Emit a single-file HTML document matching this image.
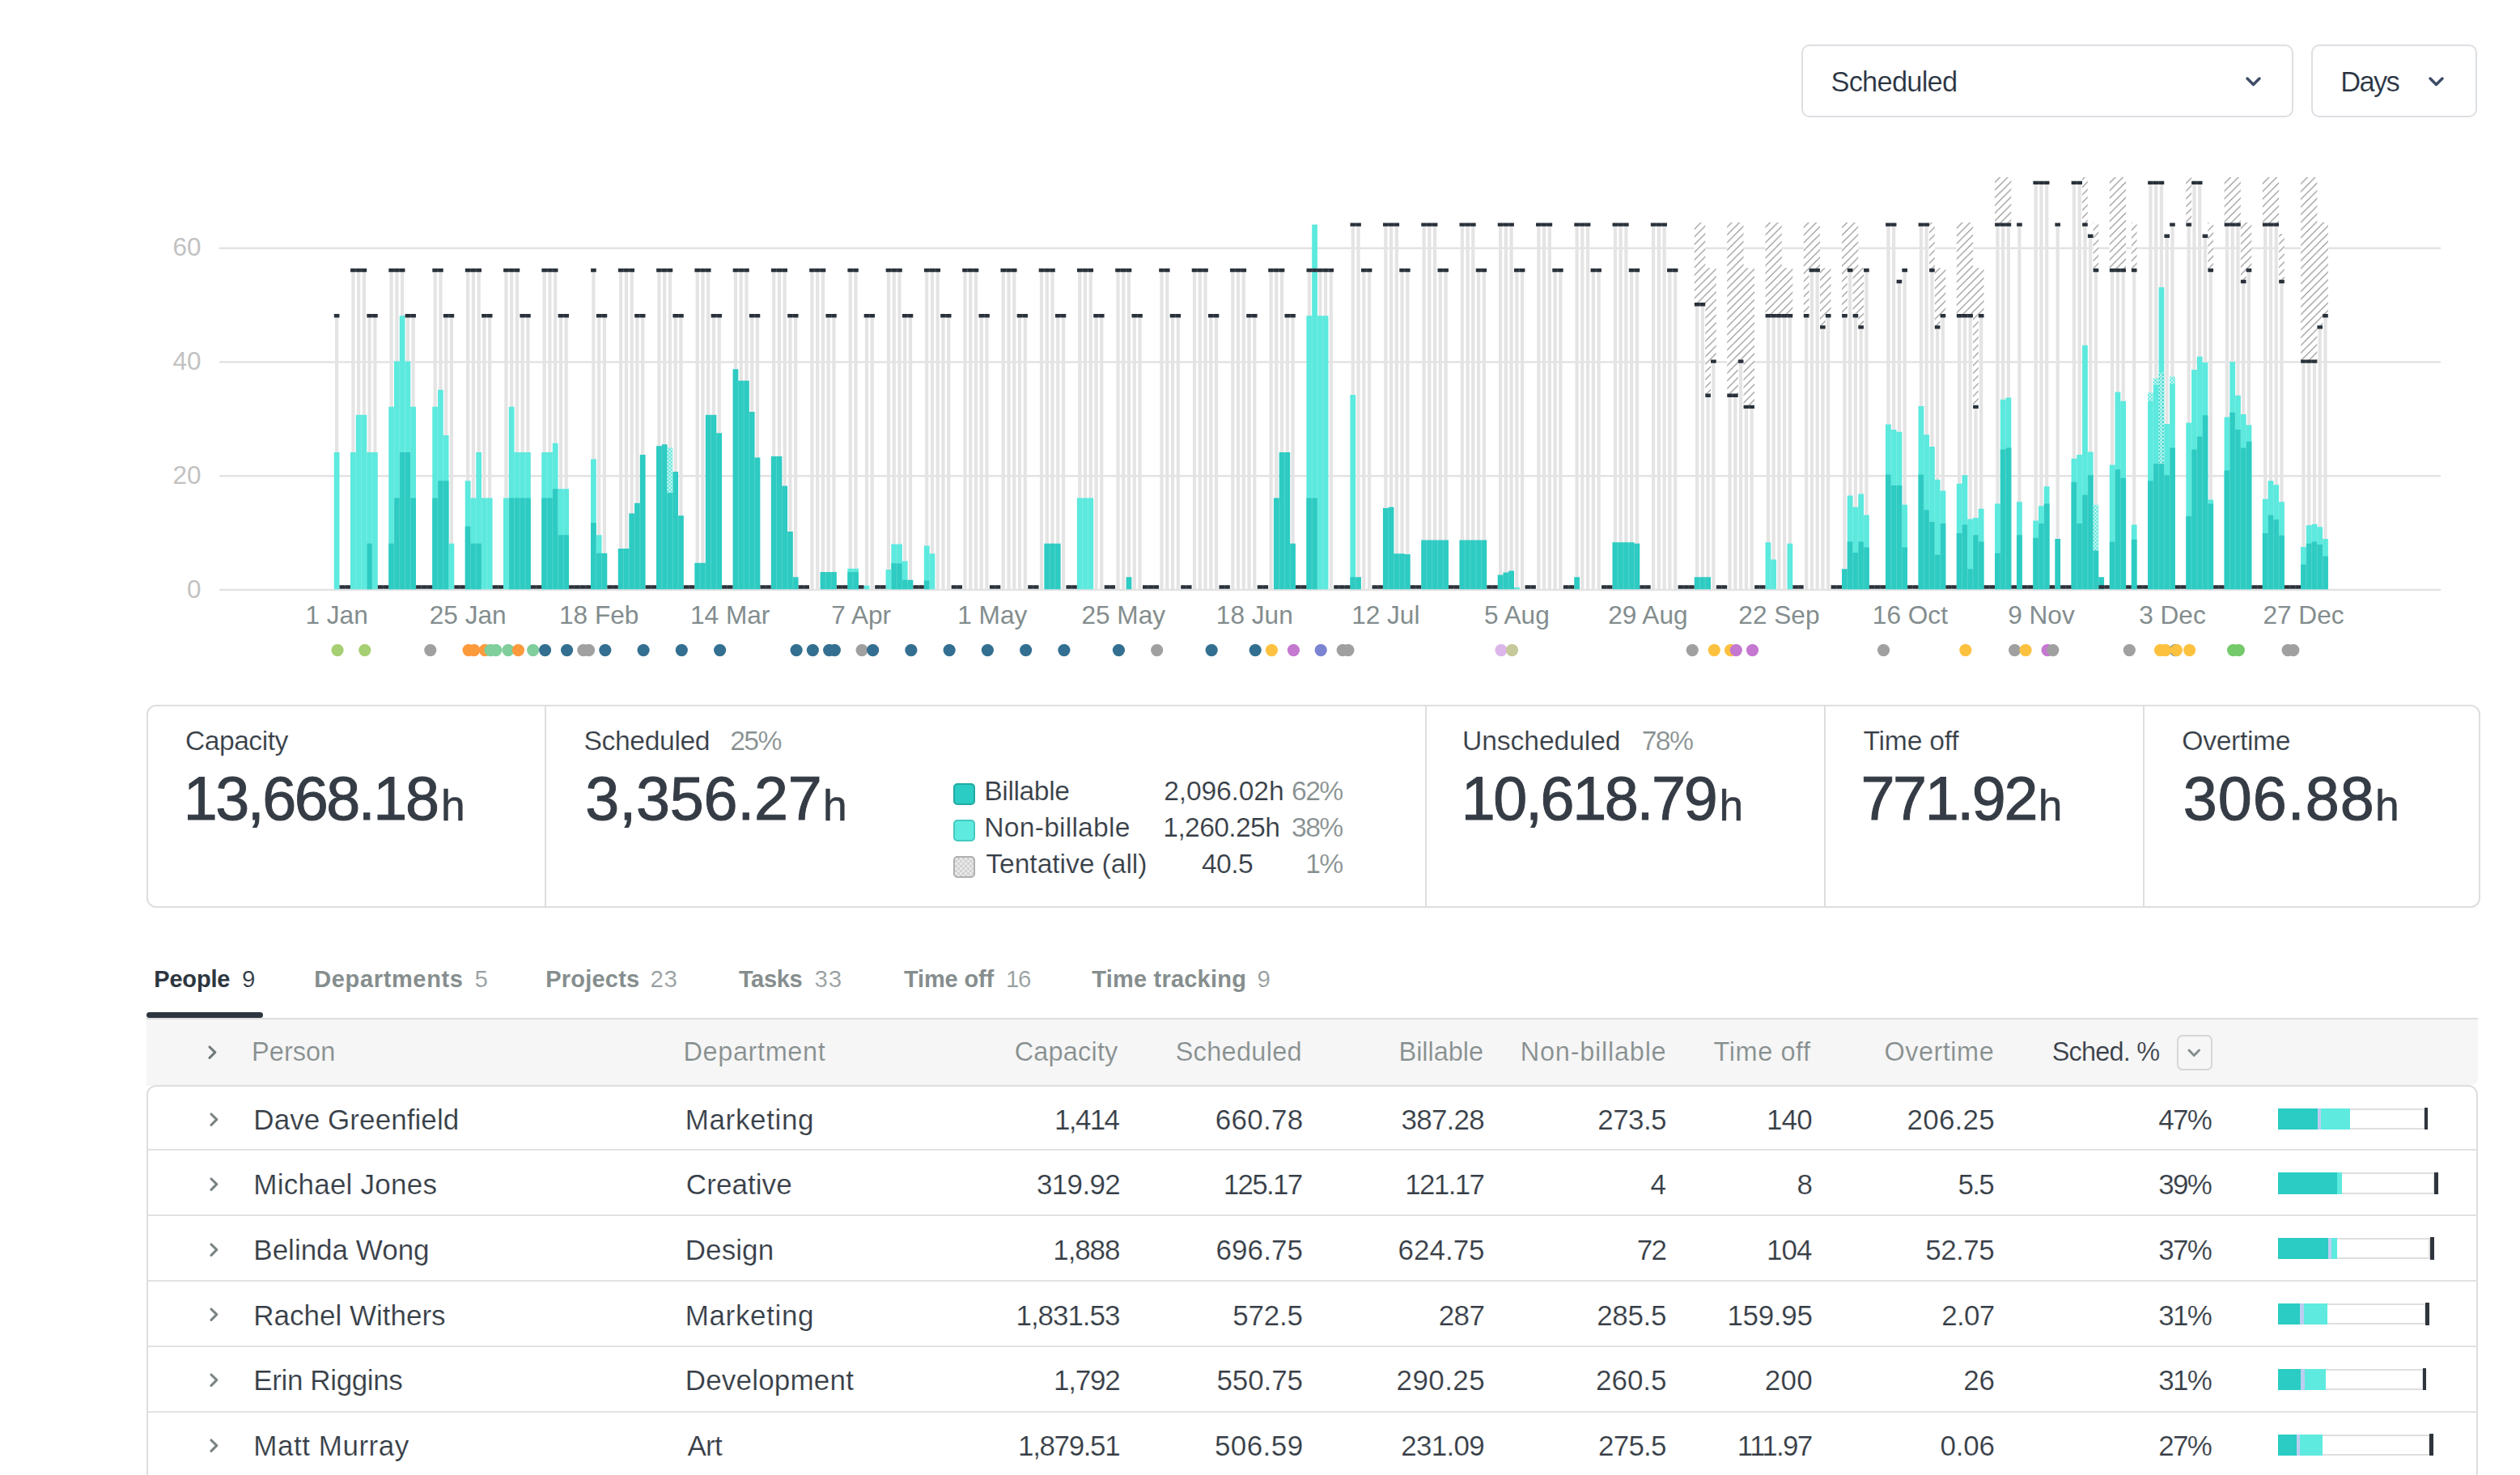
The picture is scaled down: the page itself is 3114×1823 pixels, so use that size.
<!DOCTYPE html>
<html lang="en"><head><meta charset="utf-8"><title>Report</title>
<style>
*{box-sizing:border-box;margin:0;padding:0}
html,body{width:3114px;height:1823px;overflow:hidden;background:#fff}
body{font-family:"Liberation Sans",sans-serif;color:#363d46;position:relative}
.a{position:absolute}
.t{position:absolute;line-height:1;white-space:nowrap}
.chart{position:absolute;left:0;top:0}
.chart text{font-family:"Liberation Sans",sans-serif}
.yl{font-size:31.5px;fill:#c2c2c2}
.xl{font-size:31.6px;fill:#838d8e}
.dd{position:absolute;top:55px;height:90px;border:2px solid #dddfe3;border-radius:10px;background:#fff}
.cards{position:absolute;left:181px;top:871px;width:2884px;height:251px;border:2px solid #dedede;border-radius:12px}
.cards i{position:absolute;top:0;width:2px;height:247px;background:#dedede}
.sw{position:absolute;left:1178px;width:27px;height:27px;border-radius:5px;border:2px solid}
.bt{position:absolute;height:26.2px}
</style></head><body>
<svg class="chart" width="3114" height="850" viewBox="0 0 3114 850">
<defs><pattern id="hatch" width="9.5" height="9.5" patternUnits="userSpaceOnUse" patternTransform="translate(2 0)"><rect width="9.5" height="9.5" fill="#fff"/><path d="M-1 10.5L10.5 -1M-5.75 5.75L5.75 -5.75M3.75 15.25L15.25 3.75" stroke="#858585" stroke-width="1.1"/></pattern><pattern id="chk" width="4.5" height="4.5" patternUnits="userSpaceOnUse" patternTransform="translate(0.75 1)"><rect width="4.5" height="4.5" fill="#55e4d9"/><rect width="2.25" height="2.25" fill="#d4f9f5"/><rect x="2.25" y="2.25" width="2.25" height="2.25" fill="#d4f9f5"/></pattern><pattern id="chk3" width="4.5" height="4.5" patternUnits="userSpaceOnUse" patternTransform="translate(0.75 1)"><rect width="4.5" height="4.5" fill="#5ce9de"/><rect x="2.25" width="2.25" height="2.25" fill="#d4f9f5"/><rect x="2.25" y="2.25" width="2.25" height="2.25" fill="#2dcbc2"/><rect y="2.25" width="2.25" height="2.25" fill="#d4f9f5"/></pattern></defs>
<rect x="271" y="727.8" width="2745" height="2.4" fill="#e2e2e2"/>
<rect x="271" y="587.04" width="2745" height="2.4" fill="#e2e2e2"/>
<rect x="271" y="446.28" width="2745" height="2.4" fill="#e2e2e2"/>
<rect x="271" y="305.52" width="2745" height="2.4" fill="#e2e2e2"/>
<text x="248.6" y="738.7" text-anchor="end" class="yl">0</text>
<text x="248.6" y="597.94" text-anchor="end" class="yl">20</text>
<text x="248.6" y="457.18" text-anchor="end" class="yl">40</text>
<text x="248.6" y="316.42" text-anchor="end" class="yl">60</text>
<path d="M414.03 728.3V391.18h4.2V728.3zM434.28 728.3V334.87h4.2V728.3zM441.03 728.3V334.87h4.2V728.3zM447.78 728.3V334.87h4.2V728.3zM454.53 728.3V391.18h4.2V728.3zM461.28 728.3V391.18h4.2V728.3zM481.54 728.3V334.87h4.2V728.3zM488.29 728.3V334.87h4.2V728.3zM495.04 728.3V334.87h4.2V728.3zM501.79 728.3V391.18h4.2V728.3zM508.54 728.3V391.18h4.2V728.3zM535.54 728.3V334.87h4.2V728.3zM542.29 728.3V334.87h4.2V728.3zM549.05 728.3V391.18h4.2V728.3zM555.8 728.3V391.18h4.2V728.3zM576.05 728.3V334.87h4.2V728.3zM582.8 728.3V334.87h4.2V728.3zM589.55 728.3V334.87h4.2V728.3zM596.3 728.3V391.18h4.2V728.3zM603.05 728.3V391.18h4.2V728.3zM623.31 728.3V334.87h4.2V728.3zM630.06 728.3V334.87h4.2V728.3zM636.81 728.3V334.87h4.2V728.3zM643.56 728.3V391.18h4.2V728.3zM650.31 728.3V391.18h4.2V728.3zM670.56 728.3V334.87h4.2V728.3zM677.31 728.3V334.87h4.2V728.3zM684.07 728.3V334.87h4.2V728.3zM690.82 728.3V391.18h4.2V728.3zM697.57 728.3V391.18h4.2V728.3zM731.32 728.3V334.87h4.2V728.3zM738.07 728.3V391.18h4.2V728.3zM744.82 728.3V391.18h4.2V728.3zM765.08 728.3V334.87h4.2V728.3zM771.83 728.3V334.87h4.2V728.3zM778.58 728.3V334.87h4.2V728.3zM785.33 728.3V391.18h4.2V728.3zM792.08 728.3V391.18h4.2V728.3zM812.33 728.3V334.87h4.2V728.3zM819.09 728.3V334.87h4.2V728.3zM825.84 728.3V334.87h4.2V728.3zM832.59 728.3V391.18h4.2V728.3zM839.34 728.3V391.18h4.2V728.3zM859.59 728.3V334.87h4.2V728.3zM866.34 728.3V334.87h4.2V728.3zM873.09 728.3V334.87h4.2V728.3zM879.84 728.3V391.18h4.2V728.3zM886.6 728.3V391.18h4.2V728.3zM906.85 728.3V334.87h4.2V728.3zM913.6 728.3V334.87h4.2V728.3zM920.35 728.3V334.87h4.2V728.3zM927.1 728.3V391.18h4.2V728.3zM933.85 728.3V391.18h4.2V728.3zM954.11 728.3V334.87h4.2V728.3zM960.86 728.3V334.87h4.2V728.3zM967.61 728.3V334.87h4.2V728.3zM974.36 728.3V391.18h4.2V728.3zM981.11 728.3V391.18h4.2V728.3zM1001.36 728.3V334.87h4.2V728.3zM1008.11 728.3V334.87h4.2V728.3zM1014.86 728.3V334.87h4.2V728.3zM1021.62 728.3V391.18h4.2V728.3zM1028.37 728.3V391.18h4.2V728.3zM1048.62 728.3V334.87h4.2V728.3zM1055.37 728.3V334.87h4.2V728.3zM1068.87 728.3V391.18h4.2V728.3zM1075.62 728.3V391.18h4.2V728.3zM1095.88 728.3V334.87h4.2V728.3zM1102.63 728.3V334.87h4.2V728.3zM1109.38 728.3V334.87h4.2V728.3zM1116.13 728.3V391.18h4.2V728.3zM1122.88 728.3V391.18h4.2V728.3zM1143.13 728.3V334.87h4.2V728.3zM1149.88 728.3V334.87h4.2V728.3zM1156.64 728.3V334.87h4.2V728.3zM1163.39 728.3V391.18h4.2V728.3zM1170.14 728.3V391.18h4.2V728.3zM1190.39 728.3V334.87h4.2V728.3zM1197.14 728.3V334.87h4.2V728.3zM1203.89 728.3V334.87h4.2V728.3zM1210.64 728.3V391.18h4.2V728.3zM1217.39 728.3V391.18h4.2V728.3zM1237.65 728.3V334.87h4.2V728.3zM1244.4 728.3V334.87h4.2V728.3zM1251.15 728.3V334.87h4.2V728.3zM1257.9 728.3V391.18h4.2V728.3zM1264.65 728.3V391.18h4.2V728.3zM1284.9 728.3V334.87h4.2V728.3zM1291.66 728.3V334.87h4.2V728.3zM1298.41 728.3V334.87h4.2V728.3zM1305.16 728.3V391.18h4.2V728.3zM1311.91 728.3V391.18h4.2V728.3zM1332.16 728.3V334.87h4.2V728.3zM1338.91 728.3V334.87h4.2V728.3zM1345.66 728.3V334.87h4.2V728.3zM1352.41 728.3V391.18h4.2V728.3zM1359.17 728.3V391.18h4.2V728.3zM1379.42 728.3V334.87h4.2V728.3zM1386.17 728.3V334.87h4.2V728.3zM1392.92 728.3V334.87h4.2V728.3zM1399.67 728.3V391.18h4.2V728.3zM1406.42 728.3V391.18h4.2V728.3zM1433.43 728.3V334.87h4.2V728.3zM1440.18 728.3V334.87h4.2V728.3zM1446.93 728.3V391.18h4.2V728.3zM1453.68 728.3V391.18h4.2V728.3zM1473.93 728.3V334.87h4.2V728.3zM1480.68 728.3V334.87h4.2V728.3zM1487.43 728.3V334.87h4.2V728.3zM1494.19 728.3V391.18h4.2V728.3zM1500.94 728.3V391.18h4.2V728.3zM1521.19 728.3V334.87h4.2V728.3zM1527.94 728.3V334.87h4.2V728.3zM1534.69 728.3V334.87h4.2V728.3zM1541.44 728.3V391.18h4.2V728.3zM1548.19 728.3V391.18h4.2V728.3zM1568.45 728.3V334.87h4.2V728.3zM1575.2 728.3V334.87h4.2V728.3zM1581.95 728.3V334.87h4.2V728.3zM1588.7 728.3V391.18h4.2V728.3zM1595.45 728.3V391.18h4.2V728.3zM1615.7 728.3V334.87h4.2V728.3zM1622.45 728.3V334.87h4.2V728.3zM1629.21 728.3V334.87h4.2V728.3zM1635.96 728.3V334.87h4.2V728.3zM1642.71 728.3V334.87h4.2V728.3zM1669.71 728.3V278.57h4.2V728.3zM1676.46 728.3V278.57h4.2V728.3zM1683.21 728.3V334.87h4.2V728.3zM1689.96 728.3V334.87h4.2V728.3zM1710.22 728.3V278.57h4.2V728.3zM1716.97 728.3V278.57h4.2V728.3zM1723.72 728.3V278.57h4.2V728.3zM1730.47 728.3V334.87h4.2V728.3zM1737.22 728.3V334.87h4.2V728.3zM1757.47 728.3V278.57h4.2V728.3zM1764.23 728.3V278.57h4.2V728.3zM1770.98 728.3V278.57h4.2V728.3zM1777.73 728.3V334.87h4.2V728.3zM1784.48 728.3V334.87h4.2V728.3zM1804.73 728.3V278.57h4.2V728.3zM1811.48 728.3V278.57h4.2V728.3zM1818.23 728.3V278.57h4.2V728.3zM1824.98 728.3V334.87h4.2V728.3zM1831.74 728.3V334.87h4.2V728.3zM1851.99 728.3V278.57h4.2V728.3zM1858.74 728.3V278.57h4.2V728.3zM1865.49 728.3V278.57h4.2V728.3zM1872.24 728.3V334.87h4.2V728.3zM1878.99 728.3V334.87h4.2V728.3zM1899.25 728.3V278.57h4.2V728.3zM1906 728.3V278.57h4.2V728.3zM1912.75 728.3V278.57h4.2V728.3zM1919.5 728.3V334.87h4.2V728.3zM1926.25 728.3V334.87h4.2V728.3zM1946.5 728.3V278.57h4.2V728.3zM1953.25 728.3V278.57h4.2V728.3zM1960 728.3V278.57h4.2V728.3zM1966.76 728.3V334.87h4.2V728.3zM1973.51 728.3V334.87h4.2V728.3zM1993.76 728.3V278.57h4.2V728.3zM2000.51 728.3V278.57h4.2V728.3zM2007.26 728.3V278.57h4.2V728.3zM2014.01 728.3V334.87h4.2V728.3zM2020.76 728.3V334.87h4.2V728.3zM2041.02 728.3V278.57h4.2V728.3zM2047.77 728.3V278.57h4.2V728.3zM2054.52 728.3V278.57h4.2V728.3zM2061.27 728.3V334.87h4.2V728.3zM2068.02 728.3V334.87h4.2V728.3zM2095.02 728.3V377.1h4.2V728.3zM2101.78 728.3V377.1h4.2V728.3zM2108.53 728.3V489.71h4.2V728.3zM2115.28 728.3V447.48h4.2V728.3zM2135.53 728.3V489.71h4.2V728.3zM2142.28 728.3V489.71h4.2V728.3zM2149.03 728.3V447.48h4.2V728.3zM2155.78 728.3V503.78h4.2V728.3zM2162.53 728.3V503.78h4.2V728.3zM2182.79 728.3V391.18h4.2V728.3zM2189.54 728.3V391.18h4.2V728.3zM2196.29 728.3V391.18h4.2V728.3zM2203.04 728.3V391.18h4.2V728.3zM2209.79 728.3V391.18h4.2V728.3zM2230.04 728.3V391.18h4.2V728.3zM2236.8 728.3V334.87h4.2V728.3zM2243.55 728.3V334.87h4.2V728.3zM2250.3 728.3V405.25h4.2V728.3zM2257.05 728.3V391.18h4.2V728.3zM2277.3 728.3V391.18h4.2V728.3zM2284.05 728.3V334.87h4.2V728.3zM2290.8 728.3V391.18h4.2V728.3zM2297.55 728.3V405.25h4.2V728.3zM2304.31 728.3V334.87h4.2V728.3zM2331.31 728.3V278.57h4.2V728.3zM2338.06 728.3V278.57h4.2V728.3zM2344.81 728.3V348.95h4.2V728.3zM2351.56 728.3V334.87h4.2V728.3zM2371.82 728.3V278.57h4.2V728.3zM2378.57 728.3V278.57h4.2V728.3zM2385.32 728.3V334.87h4.2V728.3zM2392.07 728.3V405.25h4.2V728.3zM2398.82 728.3V391.18h4.2V728.3zM2419.07 728.3V391.18h4.2V728.3zM2425.82 728.3V391.18h4.2V728.3zM2432.57 728.3V391.18h4.2V728.3zM2439.33 728.3V503.78h4.2V728.3zM2446.08 728.3V391.18h4.2V728.3zM2466.33 728.3V278.57h4.2V728.3zM2473.08 728.3V278.57h4.2V728.3zM2479.83 728.3V278.57h4.2V728.3zM2493.33 728.3V278.57h4.2V728.3zM2513.59 728.3V226.77h4.2V728.3zM2520.34 728.3V226.77h4.2V728.3zM2527.09 728.3V226.77h4.2V728.3zM2540.59 728.3V278.57h4.2V728.3zM2560.84 728.3V226.77h4.2V728.3zM2567.59 728.3V226.77h4.2V728.3zM2574.35 728.3V278.57h4.2V728.3zM2581.1 728.3V292.64h4.2V728.3zM2587.85 728.3V334.87h4.2V728.3zM2608.1 728.3V334.87h4.2V728.3zM2614.85 728.3V334.87h4.2V728.3zM2621.6 728.3V334.87h4.2V728.3zM2635.1 728.3V334.87h4.2V728.3zM2655.36 728.3V226.77h4.2V728.3zM2662.11 728.3V226.77h4.2V728.3zM2668.86 728.3V226.77h4.2V728.3zM2675.61 728.3V292.64h4.2V728.3zM2682.36 728.3V278.57h4.2V728.3zM2702.61 728.3V278.57h4.2V728.3zM2709.37 728.3V226.77h4.2V728.3zM2716.12 728.3V226.77h4.2V728.3zM2722.87 728.3V292.64h4.2V728.3zM2729.62 728.3V334.87h4.2V728.3zM2749.87 728.3V278.57h4.2V728.3zM2756.62 728.3V278.57h4.2V728.3zM2763.37 728.3V278.57h4.2V728.3zM2770.12 728.3V348.95h4.2V728.3zM2776.88 728.3V334.87h4.2V728.3zM2797.13 728.3V278.57h4.2V728.3zM2803.88 728.3V278.57h4.2V728.3zM2810.63 728.3V278.57h4.2V728.3zM2817.38 728.3V348.95h4.2V728.3zM2844.39 728.3V447.48h4.2V728.3zM2851.14 728.3V447.48h4.2V728.3zM2857.89 728.3V447.48h4.2V728.3zM2864.64 728.3V405.25h4.2V728.3zM2871.39 728.3V391.18h4.2V728.3z" fill="#e4e4e4"/>
<path d="M2093.75 377.1V275.05h6.75V377.1zM2100.5 377.1V275.05h6.75V377.1zM2107.25 489.71V331.35h6.75V489.71zM2114 447.48V331.35h6.75V447.48zM2134.26 489.71V275.05h6.75V489.71zM2141.01 489.71V275.05h6.75V489.71zM2147.76 447.48V275.05h6.75V447.48zM2154.51 503.78V331.35h6.75V503.78zM2161.26 503.78V331.35h6.75V503.78zM2181.51 391.18V275.05h6.75V391.18zM2188.26 391.18V275.05h6.75V391.18zM2195.01 391.18V275.05h6.75V391.18zM2201.77 391.18V331.35h6.75V391.18zM2208.52 391.18V331.35h6.75V391.18zM2228.77 391.18V275.05h6.75V391.18zM2235.52 334.87V275.05h6.75V334.87zM2242.27 334.87V275.05h6.75V334.87zM2249.02 405.25V331.35h6.75V405.25zM2255.77 391.18V331.35h6.75V391.18zM2276.03 391.18V275.05h6.75V391.18zM2282.78 334.87V275.05h6.75V334.87zM2289.53 391.18V275.05h6.75V391.18zM2296.28 405.25V331.35h6.75V405.25zM2384.04 334.87V275.05h6.75V334.87zM2390.79 405.25V331.35h6.75V405.25zM2397.54 391.18V331.35h6.75V391.18zM2417.8 391.18V275.05h6.75V391.18zM2424.55 391.18V275.05h6.75V391.18zM2431.3 391.18V275.05h6.75V391.18zM2438.05 503.78V331.35h6.75V503.78zM2444.8 391.18V331.35h6.75V391.18zM2465.05 278.57V219.1h6.75V278.57zM2471.81 278.57V219.1h6.75V278.57zM2478.56 278.57V219.1h6.75V278.57zM2573.07 278.57V219.1h6.75V278.57zM2586.57 334.87V275.05h6.75V334.87zM2606.83 334.87V219.1h6.75V334.87zM2613.58 334.87V219.1h6.75V334.87zM2620.33 334.87V219.1h6.75V334.87zM2633.83 334.87V275.05h6.75V334.87zM2701.34 278.57V219.1h6.75V278.57zM2728.34 334.87V275.05h6.75V334.87zM2748.6 278.57V219.1h6.75V278.57zM2755.35 278.57V219.1h6.75V278.57zM2762.1 278.57V219.1h6.75V278.57zM2768.85 348.95V275.05h6.75V348.95zM2775.6 334.87V275.05h6.75V334.87zM2795.85 278.57V219.1h6.75V278.57zM2802.6 278.57V219.1h6.75V278.57zM2809.36 278.57V219.1h6.75V278.57zM2816.11 348.95V289.12h6.75V348.95zM2843.11 447.48V219.1h6.75V447.48zM2849.86 447.48V219.1h6.75V447.48zM2856.61 447.48V219.1h6.75V447.48zM2863.36 405.25V275.05h6.75V405.25zM2870.11 391.18V275.05h6.75V391.18z" fill="url(#hatch)"/>
<path d="M412.75 728.3V559.09h6.75V728.3zM433 728.3V559.09h6.75V728.3zM439.75 728.3V512.64h6.75V728.3zM446.5 728.3V512.64h6.75V728.3zM453.26 728.3V559.09h6.75V728.3zM460.01 728.3V559.09h6.75V728.3zM480.26 728.3V502.78h6.75V728.3zM487.01 728.3V446.48h6.75V728.3zM493.76 728.3V390.18h6.75V728.3zM500.51 728.3V446.48h6.75V728.3zM507.26 728.3V502.78h6.75V728.3zM534.27 728.3V502.78h6.75V728.3zM541.02 728.3V481.67h6.75V728.3zM547.77 728.3V537.97h6.75V728.3zM554.52 728.3V671.7h6.75V728.3zM574.77 728.3V594.28h6.75V728.3zM581.52 728.3V615.39h6.75V728.3zM588.28 728.3V559.09h6.75V728.3zM595.03 728.3V615.39h6.75V728.3zM601.78 728.3V615.39h6.75V728.3zM622.03 728.3V615.39h6.75V728.3zM628.78 728.3V502.78h6.75V728.3zM635.53 728.3V559.09h6.75V728.3zM642.28 728.3V559.09h6.75V728.3zM649.04 728.3V559.09h6.75V728.3zM669.29 728.3V559.09h6.75V728.3zM676.04 728.3V559.09h6.75V728.3zM682.79 728.3V547.83h6.75V728.3zM689.54 728.3V604.13h6.75V728.3zM696.29 728.3V604.13h6.75V728.3zM730.05 728.3V567.53h6.75V728.3zM736.8 728.3V661.14h6.75V728.3zM1047.34 728.3V702.66h6.75V728.3zM1054.1 728.3V702.66h6.75V728.3zM1067.6 728.3V723.78h6.75V728.3zM1094.6 728.3V704.07h6.75V728.3zM1101.35 728.3V672.4h6.75V728.3zM1108.1 728.3V672.4h6.75V728.3zM1114.85 728.3V693.51h6.75V728.3zM1141.86 728.3V674.51h6.75V728.3zM1148.61 728.3V684.36h6.75V728.3zM1330.89 728.3V615.39h6.75V728.3zM1337.64 728.3V615.39h6.75V728.3zM1344.39 728.3V615.39h6.75V728.3zM1614.43 728.3V390.18h6.75V728.3zM1621.18 728.3V277.57h6.75V728.3zM1627.93 728.3V390.18h6.75V728.3zM1634.68 728.3V390.18h6.75V728.3zM1668.44 728.3V488h6.75V728.3zM1870.97 728.3V725.89h6.75V728.3zM2181.51 728.3V670.29h6.75V728.3zM2188.26 728.3V691.4h6.75V728.3zM2208.52 728.3V671.7h6.75V728.3zM2282.78 728.3V612.58h6.75V728.3zM2289.53 728.3V626.65h6.75V728.3zM2296.28 728.3V610.47h6.75V728.3zM2303.03 728.3V636.51h6.75V728.3zM2330.03 728.3V524.6h6.75V728.3zM2336.78 728.3V530.94h6.75V728.3zM2343.54 728.3V533.75h6.75V728.3zM2350.29 728.3V623.84h6.75V728.3zM2370.54 728.3V502.08h6.75V728.3zM2377.29 728.3V537.27h6.75V728.3zM2384.04 728.3V552.05h6.75V728.3zM2390.79 728.3V592.87h6.75V728.3zM2397.54 728.3V606.59h6.75V728.3zM2417.8 728.3V597.8h6.75V728.3zM2424.55 728.3V587.24h6.75V728.3zM2431.3 728.3V641.43h6.75V728.3zM2438.05 728.3V640.02h6.75V728.3zM2444.8 728.3V628.76h6.75V728.3zM2465.05 728.3V622.43h6.75V728.3zM2471.81 728.3V493.63h6.75V728.3zM2478.56 728.3V491.52h6.75V728.3zM2492.06 728.3V620.32h6.75V728.3zM2512.31 728.3V643.54h6.75V728.3zM2519.06 728.3V625.25h6.75V728.3zM2525.81 728.3V601.32h6.75V728.3zM2559.57 728.3V566.83h6.75V728.3zM2566.32 728.3V561.9h6.75V728.3zM2573.07 728.3V426.77h6.75V728.3zM2579.82 728.3V558.38h6.75V728.3zM2606.83 728.3V574.57h6.75V728.3zM2613.58 728.3V484.49h6.75V728.3zM2620.33 728.3V495.75h6.75V728.3zM2633.83 728.3V648.47h6.75V728.3zM2654.08 728.3V488.71h6.75V728.3zM2660.83 728.3V469h6.75V728.3zM2667.58 728.3V354.99h6.75V728.3zM2674.34 728.3V523.9h6.75V728.3zM2681.09 728.3V467.59h6.75V728.3zM2701.34 728.3V522.49h6.75V728.3zM2708.09 728.3V457.04h6.75V728.3zM2714.84 728.3V440.85h6.75V728.3zM2721.59 728.3V447.89h6.75V728.3zM2728.34 728.3V617.5h6.75V728.3zM2748.6 728.3V515.45h6.75V728.3zM2755.35 728.3V447.18h6.75V728.3zM2762.1 728.3V488.71h6.75V728.3zM2768.85 728.3V511.93h6.75V728.3zM2775.6 728.3V525.31h6.75V728.3zM2795.85 728.3V616.8h6.75V728.3zM2802.6 728.3V594.28h6.75V728.3zM2809.36 728.3V599.2h6.75V728.3zM2816.11 728.3V620.32h6.75V728.3zM2843.11 728.3V675.92h6.75V728.3zM2849.86 728.3V649.17h6.75V728.3zM2856.61 728.3V647.77h6.75V728.3zM2863.36 728.3V651.29h6.75V728.3zM2870.11 728.3V666.07h6.75V728.3z" fill="#5ce9de"/>
<path d="M453.26 728.3V671.7h6.75V728.3zM480.26 728.3V671.7h6.75V728.3zM487.01 728.3V615.39h6.75V728.3zM493.76 728.3V559.09h6.75V728.3zM500.51 728.3V559.09h6.75V728.3zM507.26 728.3V615.39h6.75V728.3zM534.27 728.3V615.39h6.75V728.3zM541.02 728.3V594.28h6.75V728.3zM547.77 728.3V594.28h6.75V728.3zM574.77 728.3V650.58h6.75V728.3zM581.52 728.3V671.7h6.75V728.3zM588.28 728.3V671.7h6.75V728.3zM628.78 728.3V615.39h6.75V728.3zM635.53 728.3V615.39h6.75V728.3zM642.28 728.3V615.39h6.75V728.3zM649.04 728.3V615.39h6.75V728.3zM669.29 728.3V615.39h6.75V728.3zM676.04 728.3V615.39h6.75V728.3zM682.79 728.3V604.13h6.75V728.3zM689.54 728.3V661.14h6.75V728.3zM696.29 728.3V661.14h6.75V728.3zM730.05 728.3V646.36h6.75V728.3zM736.8 728.3V683.66h6.75V728.3zM743.55 728.3V683.66h6.75V728.3zM763.8 728.3V678.03h6.75V728.3zM770.55 728.3V678.03h6.75V728.3zM777.3 728.3V634.39h6.75V728.3zM784.06 728.3V621.73h6.75V728.3zM790.81 728.3V561.9h6.75V728.3zM811.06 728.3V551.35h6.75V728.3zM817.81 728.3V549.23h6.75V728.3zM824.56 728.3V609.06h6.75V728.3zM831.31 728.3V583.02h6.75V728.3zM838.06 728.3V637.21h6.75V728.3zM858.32 728.3V695.63h6.75V728.3zM865.07 728.3V695.63h6.75V728.3zM871.82 728.3V512.64h6.75V728.3zM878.57 728.3V512.64h6.75V728.3zM885.32 728.3V535.16h6.75V728.3zM905.57 728.3V456.33h6.75V728.3zM912.32 728.3V470.41h6.75V728.3zM919.08 728.3V470.41h6.75V728.3zM925.83 728.3V509.12h6.75V728.3zM932.58 728.3V565.42h6.75V728.3zM952.83 728.3V564.01h6.75V728.3zM959.58 728.3V564.01h6.75V728.3zM966.33 728.3V600.61h6.75V728.3zM973.08 728.3V656.92h6.75V728.3zM979.83 728.3V713.22h6.75V728.3zM1013.59 728.3V706.89h6.75V728.3zM1020.34 728.3V706.89h6.75V728.3zM1027.09 728.3V706.89h6.75V728.3zM1047.34 728.3V706.89h6.75V728.3zM1054.1 728.3V706.89h6.75V728.3zM1101.35 728.3V696.33h6.75V728.3zM1108.1 728.3V696.33h6.75V728.3zM1114.85 728.3V716.74h6.75V728.3zM1121.61 728.3V716.74h6.75V728.3zM1141.86 728.3V717.44h6.75V728.3zM1290.38 728.3V671.7h6.75V728.3zM1297.13 728.3V671.7h6.75V728.3zM1303.88 728.3V671.7h6.75V728.3zM1391.64 728.3V713.22h6.75V728.3zM1573.92 728.3V615.39h6.75V728.3zM1580.67 728.3V559.09h6.75V728.3zM1587.42 728.3V559.09h6.75V728.3zM1594.17 728.3V671.7h6.75V728.3zM1614.43 728.3V615.39h6.75V728.3zM1621.18 728.3V615.39h6.75V728.3zM1668.44 728.3V713.22h6.75V728.3zM1675.19 728.3V713.22h6.75V728.3zM1708.94 728.3V628.06h6.75V728.3zM1715.69 728.3V626.65h6.75V728.3zM1722.44 728.3V684.36h6.75V728.3zM1729.2 728.3V684.36h6.75V728.3zM1735.95 728.3V685.07h6.75V728.3zM1756.2 728.3V667.47h6.75V728.3zM1762.95 728.3V667.47h6.75V728.3zM1769.7 728.3V667.47h6.75V728.3zM1776.45 728.3V667.47h6.75V728.3zM1783.2 728.3V667.47h6.75V728.3zM1803.46 728.3V667.47h6.75V728.3zM1810.21 728.3V667.47h6.75V728.3zM1816.96 728.3V667.47h6.75V728.3zM1823.71 728.3V667.47h6.75V728.3zM1830.46 728.3V667.47h6.75V728.3zM1850.71 728.3V710.4h6.75V728.3zM1857.46 728.3V707.59h6.75V728.3zM1864.22 728.3V705.48h6.75V728.3zM1945.23 728.3V713.22h6.75V728.3zM1992.48 728.3V670.29h6.75V728.3zM1999.24 728.3V670.29h6.75V728.3zM2005.99 728.3V670.29h6.75V728.3zM2012.74 728.3V670.29h6.75V728.3zM2019.49 728.3V671.7h6.75V728.3zM2093.75 728.3V713.22h6.75V728.3zM2100.5 728.3V713.22h6.75V728.3zM2107.25 728.3V713.22h6.75V728.3zM2276.03 728.3V703.37h6.75V728.3zM2282.78 728.3V669.58h6.75V728.3zM2289.53 728.3V682.96h6.75V728.3zM2296.28 728.3V669.58h6.75V728.3zM2303.03 728.3V676.62h6.75V728.3zM2330.03 728.3V586.54h6.75V728.3zM2336.78 728.3V599.91h6.75V728.3zM2343.54 728.3V599.91h6.75V728.3zM2350.29 728.3V676.62h6.75V728.3zM2370.54 728.3V586.54h6.75V728.3zM2377.29 728.3V630.17h6.75V728.3zM2384.04 728.3V644.95h6.75V728.3zM2390.79 728.3V685.77h6.75V728.3zM2397.54 728.3V647.06h6.75V728.3zM2417.8 728.3V659.03h6.75V728.3zM2424.55 728.3V648.47h6.75V728.3zM2431.3 728.3V703.37h6.75V728.3zM2438.05 728.3V661.14h6.75V728.3zM2444.8 728.3V669.58h6.75V728.3zM2465.05 728.3V683.66h6.75V728.3zM2471.81 728.3V555.57h6.75V728.3zM2478.56 728.3V553.46h6.75V728.3zM2492.06 728.3V661.14h6.75V728.3zM2512.31 728.3V664.66h6.75V728.3zM2519.06 728.3V647.06h6.75V728.3zM2525.81 728.3V622.43h6.75V728.3zM2539.32 728.3V666.07h6.75V728.3zM2559.57 728.3V595.69h6.75V728.3zM2566.32 728.3V647.06h6.75V728.3zM2573.07 728.3V611.87h6.75V728.3zM2579.82 728.3V587.24h6.75V728.3zM2586.57 728.3V680.14h6.75V728.3zM2593.32 728.3V713.22h6.75V728.3zM2606.83 728.3V669.58h6.75V728.3zM2613.58 728.3V580.2h6.75V728.3zM2620.33 728.3V590.76h6.75V728.3zM2633.83 728.3V666.77h6.75V728.3zM2654.08 728.3V594.28h6.75V728.3zM2660.83 728.3V573.16h6.75V728.3zM2667.58 728.3V573.16h6.75V728.3zM2674.34 728.3V587.24h6.75V728.3zM2681.09 728.3V553.46h6.75V728.3zM2701.34 728.3V637.91h6.75V728.3zM2708.09 728.3V555.57h6.75V728.3zM2714.84 728.3V539.38h6.75V728.3zM2721.59 728.3V513.34h6.75V728.3zM2728.34 728.3V622.43h6.75V728.3zM2748.6 728.3V581.61h6.75V728.3zM2755.35 728.3V509.82h6.75V728.3zM2762.1 728.3V530.94h6.75V728.3zM2768.85 728.3V553.46h6.75V728.3zM2775.6 728.3V545.72h6.75V728.3zM2795.85 728.3V659.03h6.75V728.3zM2802.6 728.3V636.51h6.75V728.3zM2809.36 728.3V642.14h6.75V728.3zM2816.11 728.3V661.84h6.75V728.3zM2843.11 728.3V697.74h6.75V728.3zM2849.86 728.3V671.7h6.75V728.3zM2856.61 728.3V669.58h6.75V728.3zM2863.36 728.3V673.1h6.75V728.3zM2870.11 728.3V687.53h6.75V728.3z" fill="#2dcbc2"/>
<rect x="824.56" y="553.46" width="6.75" height="55.6" fill="url(#chk)"/>
<rect x="2586.57" y="623.84" width="6.75" height="56.3" fill="url(#chk)"/>
<rect x="2667.58" y="460.56" width="6.75" height="112.61" fill="url(#chk3)"/>
<rect x="2654.08" y="485.19" width="6.75" height="10.56" fill="url(#chk)"/>
<rect x="2660.83" y="467.59" width="6.75" height="8.45" fill="url(#chk)"/>
<rect x="2681.09" y="465.48" width="6.75" height="9.15" fill="url(#chk)"/>
<path d="M439.75 728.3V559.09M446.5 728.3V512.64M453.26 728.3V559.09M460.01 728.3V559.09M487.01 728.3V502.78M493.76 728.3V446.48M500.51 728.3V446.48M507.26 728.3V502.78M541.02 728.3V502.78M547.77 728.3V537.97M554.52 728.3V671.7M581.52 728.3V615.39M588.28 728.3V615.39M595.03 728.3V615.39M601.78 728.3V615.39M628.78 728.3V615.39M635.53 728.3V559.09M642.28 728.3V559.09M649.04 728.3V559.09M676.04 728.3V559.09M682.79 728.3V559.09M689.54 728.3V604.13M696.29 728.3V604.13M736.8 728.3V661.14M743.55 728.3V683.66M770.55 728.3V678.03M777.3 728.3V678.03M784.06 728.3V634.39M790.81 728.3V621.73M817.81 728.3V551.35M824.56 728.3V609.06M831.31 728.3V609.06M838.06 728.3V637.21M865.07 728.3V695.63M871.82 728.3V695.63M878.57 728.3V512.64M885.32 728.3V535.16M912.32 728.3V470.41M919.08 728.3V470.41M925.83 728.3V509.12M932.58 728.3V565.42M959.58 728.3V564.01M966.33 728.3V600.61M973.08 728.3V656.92M979.83 728.3V713.22M1020.34 728.3V706.89M1027.09 728.3V706.89M1054.1 728.3V702.66M1101.35 728.3V704.07M1108.1 728.3V672.4M1114.85 728.3V693.51M1121.61 728.3V716.74M1148.61 728.3V684.36M1297.13 728.3V671.7M1303.88 728.3V671.7M1337.64 728.3V615.39M1344.39 728.3V615.39M1580.67 728.3V615.39M1587.42 728.3V559.09M1594.17 728.3V671.7M1621.18 728.3V390.18M1627.93 728.3V390.18M1634.68 728.3V390.18M1675.19 728.3V713.22M1715.69 728.3V628.06M1722.44 728.3V684.36M1729.2 728.3V684.36M1735.95 728.3V685.07M1762.95 728.3V667.47M1769.7 728.3V667.47M1776.45 728.3V667.47M1783.2 728.3V667.47M1810.21 728.3V667.47M1816.96 728.3V667.47M1823.71 728.3V667.47M1830.46 728.3V667.47M1857.46 728.3V710.4M1864.22 728.3V707.59M1999.24 728.3V670.29M2005.99 728.3V670.29M2012.74 728.3V670.29M2019.49 728.3V671.7M2100.5 728.3V713.22M2107.25 728.3V713.22M2188.26 728.3V691.4M2282.78 728.3V703.37M2289.53 728.3V626.65M2296.28 728.3V626.65M2303.03 728.3V636.51M2336.78 728.3V530.94M2343.54 728.3V533.75M2350.29 728.3V623.84M2377.29 728.3V537.27M2384.04 728.3V552.05M2390.79 728.3V592.87M2397.54 728.3V606.59M2424.55 728.3V597.8M2431.3 728.3V641.43M2438.05 728.3V641.43M2444.8 728.3V640.02M2471.81 728.3V622.43M2478.56 728.3V493.63M2519.06 728.3V643.54M2525.81 728.3V625.25M2566.32 728.3V566.83M2573.07 728.3V561.9M2579.82 728.3V558.38M2586.57 728.3V680.14M2593.32 728.3V713.22M2613.58 728.3V574.57M2620.33 728.3V495.75M2660.83 728.3V488.71M2667.58 728.3V469M2674.34 728.3V523.9M2681.09 728.3V523.9M2708.09 728.3V522.49M2714.84 728.3V457.04M2721.59 728.3V447.89M2728.34 728.3V617.5M2755.35 728.3V515.45M2762.1 728.3V488.71M2768.85 728.3V511.93M2775.6 728.3V525.31M2802.6 728.3V616.8M2809.36 728.3V599.2M2816.11 728.3V620.32M2849.86 728.3V675.92M2856.61 728.3V649.17M2863.36 728.3V651.29M2870.11 728.3V666.07" stroke="#fff" stroke-opacity=".2" stroke-width="0.9" fill="none"/>
<path d="M412.81 388.08h6.63v4.4h-6.63zM419.56 723.3h6.63v4.4h-6.63zM426.31 723.3h6.63v4.4h-6.63zM433.06 331.77h6.63v4.4h-6.63zM439.81 331.77h6.63v4.4h-6.63zM446.56 331.77h6.63v4.4h-6.63zM453.32 388.08h6.63v4.4h-6.63zM460.07 388.08h6.63v4.4h-6.63zM466.82 723.3h6.63v4.4h-6.63zM473.57 723.3h6.63v4.4h-6.63zM480.32 331.77h6.63v4.4h-6.63zM487.07 331.77h6.63v4.4h-6.63zM493.82 331.77h6.63v4.4h-6.63zM500.57 388.08h6.63v4.4h-6.63zM507.32 388.08h6.63v4.4h-6.63zM514.07 723.3h6.63v4.4h-6.63zM520.83 723.3h6.63v4.4h-6.63zM527.58 723.3h6.63v4.4h-6.63zM534.33 331.77h6.63v4.4h-6.63zM541.08 331.77h6.63v4.4h-6.63zM547.83 388.08h6.63v4.4h-6.63zM554.58 388.08h6.63v4.4h-6.63zM561.33 723.3h6.63v4.4h-6.63zM568.08 723.3h6.63v4.4h-6.63zM574.83 331.77h6.63v4.4h-6.63zM581.58 331.77h6.63v4.4h-6.63zM588.34 331.77h6.63v4.4h-6.63zM595.09 388.08h6.63v4.4h-6.63zM601.84 388.08h6.63v4.4h-6.63zM608.59 723.3h6.63v4.4h-6.63zM615.34 723.3h6.63v4.4h-6.63zM622.09 331.77h6.63v4.4h-6.63zM628.84 331.77h6.63v4.4h-6.63zM635.59 331.77h6.63v4.4h-6.63zM642.34 388.08h6.63v4.4h-6.63zM649.1 388.08h6.63v4.4h-6.63zM655.85 723.3h6.63v4.4h-6.63zM662.6 723.3h6.63v4.4h-6.63zM669.35 331.77h6.63v4.4h-6.63zM676.1 331.77h6.63v4.4h-6.63zM682.85 331.77h6.63v4.4h-6.63zM689.6 388.08h6.63v4.4h-6.63zM696.35 388.08h6.63v4.4h-6.63zM703.1 723.3h6.63v4.4h-6.63zM709.85 723.3h6.63v4.4h-6.63zM716.61 723.3h6.63v4.4h-6.63zM723.36 723.3h6.63v4.4h-6.63zM730.11 331.77h6.63v4.4h-6.63zM736.86 388.08h6.63v4.4h-6.63zM743.61 388.08h6.63v4.4h-6.63zM750.36 723.3h6.63v4.4h-6.63zM757.11 723.3h6.63v4.4h-6.63zM763.86 331.77h6.63v4.4h-6.63zM770.61 331.77h6.63v4.4h-6.63zM777.36 331.77h6.63v4.4h-6.63zM784.12 388.08h6.63v4.4h-6.63zM790.87 388.08h6.63v4.4h-6.63zM797.62 723.3h6.63v4.4h-6.63zM804.37 723.3h6.63v4.4h-6.63zM811.12 331.77h6.63v4.4h-6.63zM817.87 331.77h6.63v4.4h-6.63zM824.62 331.77h6.63v4.4h-6.63zM831.37 388.08h6.63v4.4h-6.63zM838.12 388.08h6.63v4.4h-6.63zM844.87 723.3h6.63v4.4h-6.63zM851.62 723.3h6.63v4.4h-6.63zM858.38 331.77h6.63v4.4h-6.63zM865.13 331.77h6.63v4.4h-6.63zM871.88 331.77h6.63v4.4h-6.63zM878.63 388.08h6.63v4.4h-6.63zM885.38 388.08h6.63v4.4h-6.63zM892.13 723.3h6.63v4.4h-6.63zM898.88 723.3h6.63v4.4h-6.63zM905.63 331.77h6.63v4.4h-6.63zM912.38 331.77h6.63v4.4h-6.63zM919.13 331.77h6.63v4.4h-6.63zM925.89 388.08h6.63v4.4h-6.63zM932.64 388.08h6.63v4.4h-6.63zM939.39 723.3h6.63v4.4h-6.63zM946.14 723.3h6.63v4.4h-6.63zM952.89 331.77h6.63v4.4h-6.63zM959.64 331.77h6.63v4.4h-6.63zM966.39 331.77h6.63v4.4h-6.63zM973.14 388.08h6.63v4.4h-6.63zM979.89 388.08h6.63v4.4h-6.63zM986.64 723.3h6.63v4.4h-6.63zM993.4 723.3h6.63v4.4h-6.63zM1000.15 331.77h6.63v4.4h-6.63zM1006.9 331.77h6.63v4.4h-6.63zM1013.65 331.77h6.63v4.4h-6.63zM1020.4 388.08h6.63v4.4h-6.63zM1027.15 388.08h6.63v4.4h-6.63zM1033.9 723.3h6.63v4.4h-6.63zM1040.65 723.3h6.63v4.4h-6.63zM1047.4 331.77h6.63v4.4h-6.63zM1054.15 331.77h6.63v4.4h-6.63zM1060.91 723.3h6.63v4.4h-6.63zM1067.66 388.08h6.63v4.4h-6.63zM1074.41 388.08h6.63v4.4h-6.63zM1081.16 723.3h6.63v4.4h-6.63zM1087.91 723.3h6.63v4.4h-6.63zM1094.66 331.77h6.63v4.4h-6.63zM1101.41 331.77h6.63v4.4h-6.63zM1108.16 331.77h6.63v4.4h-6.63zM1114.91 388.08h6.63v4.4h-6.63zM1121.66 388.08h6.63v4.4h-6.63zM1128.42 723.3h6.63v4.4h-6.63zM1135.17 723.3h6.63v4.4h-6.63zM1141.92 331.77h6.63v4.4h-6.63zM1148.67 331.77h6.63v4.4h-6.63zM1155.42 331.77h6.63v4.4h-6.63zM1162.17 388.08h6.63v4.4h-6.63zM1168.92 388.08h6.63v4.4h-6.63zM1175.67 723.3h6.63v4.4h-6.63zM1182.42 723.3h6.63v4.4h-6.63zM1189.17 331.77h6.63v4.4h-6.63zM1195.93 331.77h6.63v4.4h-6.63zM1202.68 331.77h6.63v4.4h-6.63zM1209.43 388.08h6.63v4.4h-6.63zM1216.18 388.08h6.63v4.4h-6.63zM1222.93 723.3h6.63v4.4h-6.63zM1229.68 723.3h6.63v4.4h-6.63zM1236.43 331.77h6.63v4.4h-6.63zM1243.18 331.77h6.63v4.4h-6.63zM1249.93 331.77h6.63v4.4h-6.63zM1256.68 388.08h6.63v4.4h-6.63zM1263.44 388.08h6.63v4.4h-6.63zM1270.19 723.3h6.63v4.4h-6.63zM1276.94 723.3h6.63v4.4h-6.63zM1283.69 331.77h6.63v4.4h-6.63zM1290.44 331.77h6.63v4.4h-6.63zM1297.19 331.77h6.63v4.4h-6.63zM1303.94 388.08h6.63v4.4h-6.63zM1310.69 388.08h6.63v4.4h-6.63zM1317.44 723.3h6.63v4.4h-6.63zM1324.19 723.3h6.63v4.4h-6.63zM1330.95 331.77h6.63v4.4h-6.63zM1337.7 331.77h6.63v4.4h-6.63zM1344.45 331.77h6.63v4.4h-6.63zM1351.2 388.08h6.63v4.4h-6.63zM1357.95 388.08h6.63v4.4h-6.63zM1364.7 723.3h6.63v4.4h-6.63zM1371.45 723.3h6.63v4.4h-6.63zM1378.2 331.77h6.63v4.4h-6.63zM1384.95 331.77h6.63v4.4h-6.63zM1391.7 331.77h6.63v4.4h-6.63zM1398.46 388.08h6.63v4.4h-6.63zM1405.21 388.08h6.63v4.4h-6.63zM1411.96 723.3h6.63v4.4h-6.63zM1418.71 723.3h6.63v4.4h-6.63zM1425.46 723.3h6.63v4.4h-6.63zM1432.21 331.77h6.63v4.4h-6.63zM1438.96 331.77h6.63v4.4h-6.63zM1445.71 388.08h6.63v4.4h-6.63zM1452.46 388.08h6.63v4.4h-6.63zM1459.21 723.3h6.63v4.4h-6.63zM1465.97 723.3h6.63v4.4h-6.63zM1472.72 331.77h6.63v4.4h-6.63zM1479.47 331.77h6.63v4.4h-6.63zM1486.22 331.77h6.63v4.4h-6.63zM1492.97 388.08h6.63v4.4h-6.63zM1499.72 388.08h6.63v4.4h-6.63zM1506.47 723.3h6.63v4.4h-6.63zM1513.22 723.3h6.63v4.4h-6.63zM1519.97 331.77h6.63v4.4h-6.63zM1526.72 331.77h6.63v4.4h-6.63zM1533.48 331.77h6.63v4.4h-6.63zM1540.23 388.08h6.63v4.4h-6.63zM1546.98 388.08h6.63v4.4h-6.63zM1553.73 723.3h6.63v4.4h-6.63zM1560.48 723.3h6.63v4.4h-6.63zM1567.23 331.77h6.63v4.4h-6.63zM1573.98 331.77h6.63v4.4h-6.63zM1580.73 331.77h6.63v4.4h-6.63zM1587.48 388.08h6.63v4.4h-6.63zM1594.23 388.08h6.63v4.4h-6.63zM1600.99 723.3h6.63v4.4h-6.63zM1607.74 723.3h6.63v4.4h-6.63zM1614.49 331.77h6.63v4.4h-6.63zM1621.24 331.77h6.63v4.4h-6.63zM1627.99 331.77h6.63v4.4h-6.63zM1634.74 331.77h6.63v4.4h-6.63zM1641.49 331.77h6.63v4.4h-6.63zM1648.24 723.3h6.63v4.4h-6.63zM1654.99 723.3h6.63v4.4h-6.63zM1661.75 723.3h6.63v4.4h-6.63zM1668.5 275.47h6.63v4.4h-6.63zM1675.25 275.47h6.63v4.4h-6.63zM1682 331.77h6.63v4.4h-6.63zM1688.75 331.77h6.63v4.4h-6.63zM1695.5 723.3h6.63v4.4h-6.63zM1702.25 723.3h6.63v4.4h-6.63zM1709 275.47h6.63v4.4h-6.63zM1715.75 275.47h6.63v4.4h-6.63zM1722.5 275.47h6.63v4.4h-6.63zM1729.26 331.77h6.63v4.4h-6.63zM1736.01 331.77h6.63v4.4h-6.63zM1742.76 723.3h6.63v4.4h-6.63zM1749.51 723.3h6.63v4.4h-6.63zM1756.26 275.47h6.63v4.4h-6.63zM1763.01 275.47h6.63v4.4h-6.63zM1769.76 275.47h6.63v4.4h-6.63zM1776.51 331.77h6.63v4.4h-6.63zM1783.26 331.77h6.63v4.4h-6.63zM1790.01 723.3h6.63v4.4h-6.63zM1796.77 723.3h6.63v4.4h-6.63zM1803.52 275.47h6.63v4.4h-6.63zM1810.27 275.47h6.63v4.4h-6.63zM1817.02 275.47h6.63v4.4h-6.63zM1823.77 331.77h6.63v4.4h-6.63zM1830.52 331.77h6.63v4.4h-6.63zM1837.27 723.3h6.63v4.4h-6.63zM1844.02 723.3h6.63v4.4h-6.63zM1850.77 275.47h6.63v4.4h-6.63zM1857.52 275.47h6.63v4.4h-6.63zM1864.28 275.47h6.63v4.4h-6.63zM1871.03 331.77h6.63v4.4h-6.63zM1877.78 331.77h6.63v4.4h-6.63zM1884.53 723.3h6.63v4.4h-6.63zM1891.28 723.3h6.63v4.4h-6.63zM1898.03 275.47h6.63v4.4h-6.63zM1904.78 275.47h6.63v4.4h-6.63zM1911.53 275.47h6.63v4.4h-6.63zM1918.28 331.77h6.63v4.4h-6.63zM1925.03 331.77h6.63v4.4h-6.63zM1931.79 723.3h6.63v4.4h-6.63zM1938.54 723.3h6.63v4.4h-6.63zM1945.29 275.47h6.63v4.4h-6.63zM1952.04 275.47h6.63v4.4h-6.63zM1958.79 275.47h6.63v4.4h-6.63zM1965.54 331.77h6.63v4.4h-6.63zM1972.29 331.77h6.63v4.4h-6.63zM1979.04 723.3h6.63v4.4h-6.63zM1985.79 723.3h6.63v4.4h-6.63zM1992.54 275.47h6.63v4.4h-6.63zM1999.3 275.47h6.63v4.4h-6.63zM2006.05 275.47h6.63v4.4h-6.63zM2012.8 331.77h6.63v4.4h-6.63zM2019.55 331.77h6.63v4.4h-6.63zM2026.3 723.3h6.63v4.4h-6.63zM2033.05 723.3h6.63v4.4h-6.63zM2039.8 275.47h6.63v4.4h-6.63zM2046.55 275.47h6.63v4.4h-6.63zM2053.3 275.47h6.63v4.4h-6.63zM2060.05 331.77h6.63v4.4h-6.63zM2066.8 331.77h6.63v4.4h-6.63zM2073.56 723.3h6.63v4.4h-6.63zM2080.31 723.3h6.63v4.4h-6.63zM2087.06 723.3h6.63v4.4h-6.63zM2093.81 374h6.63v4.4h-6.63zM2100.56 374h6.63v4.4h-6.63zM2107.31 486.61h6.63v4.4h-6.63zM2114.06 444.38h6.63v4.4h-6.63zM2120.81 723.3h6.63v4.4h-6.63zM2127.56 723.3h6.63v4.4h-6.63zM2134.32 486.61h6.63v4.4h-6.63zM2141.07 486.61h6.63v4.4h-6.63zM2147.82 444.38h6.63v4.4h-6.63zM2154.57 500.68h6.63v4.4h-6.63zM2161.32 500.68h6.63v4.4h-6.63zM2168.07 723.3h6.63v4.4h-6.63zM2174.82 723.3h6.63v4.4h-6.63zM2181.57 388.08h6.63v4.4h-6.63zM2188.32 388.08h6.63v4.4h-6.63zM2195.07 388.08h6.63v4.4h-6.63zM2201.83 388.08h6.63v4.4h-6.63zM2208.58 388.08h6.63v4.4h-6.63zM2215.33 723.3h6.63v4.4h-6.63zM2222.08 723.3h6.63v4.4h-6.63zM2228.83 388.08h6.63v4.4h-6.63zM2235.58 331.77h6.63v4.4h-6.63zM2242.33 331.77h6.63v4.4h-6.63zM2249.08 402.15h6.63v4.4h-6.63zM2255.83 388.08h6.63v4.4h-6.63zM2262.58 723.3h6.63v4.4h-6.63zM2269.34 723.3h6.63v4.4h-6.63zM2276.09 388.08h6.63v4.4h-6.63zM2282.84 331.77h6.63v4.4h-6.63zM2289.59 388.08h6.63v4.4h-6.63zM2296.34 402.15h6.63v4.4h-6.63zM2303.09 331.77h6.63v4.4h-6.63zM2309.84 723.3h6.63v4.4h-6.63zM2316.59 723.3h6.63v4.4h-6.63zM2323.34 723.3h6.63v4.4h-6.63zM2330.09 275.47h6.63v4.4h-6.63zM2336.84 275.47h6.63v4.4h-6.63zM2343.6 345.85h6.63v4.4h-6.63zM2350.35 331.77h6.63v4.4h-6.63zM2357.1 723.3h6.63v4.4h-6.63zM2363.85 723.3h6.63v4.4h-6.63zM2370.6 275.47h6.63v4.4h-6.63zM2377.35 275.47h6.63v4.4h-6.63zM2384.1 331.77h6.63v4.4h-6.63zM2390.85 402.15h6.63v4.4h-6.63zM2397.6 388.08h6.63v4.4h-6.63zM2404.36 723.3h6.63v4.4h-6.63zM2411.11 723.3h6.63v4.4h-6.63zM2417.86 388.08h6.63v4.4h-6.63zM2424.61 388.08h6.63v4.4h-6.63zM2431.36 388.08h6.63v4.4h-6.63zM2438.11 500.68h6.63v4.4h-6.63zM2444.86 388.08h6.63v4.4h-6.63zM2451.61 723.3h6.63v4.4h-6.63zM2458.36 723.3h6.63v4.4h-6.63zM2465.11 275.47h6.63v4.4h-6.63zM2471.87 275.47h6.63v4.4h-6.63zM2478.62 275.47h6.63v4.4h-6.63zM2485.37 723.3h6.63v4.4h-6.63zM2492.12 275.47h6.63v4.4h-6.63zM2498.87 723.3h6.63v4.4h-6.63zM2505.62 723.3h6.63v4.4h-6.63zM2512.37 223.67h6.63v4.4h-6.63zM2519.12 223.67h6.63v4.4h-6.63zM2525.87 223.67h6.63v4.4h-6.63zM2532.62 723.3h6.63v4.4h-6.63zM2539.38 275.47h6.63v4.4h-6.63zM2546.13 723.3h6.63v4.4h-6.63zM2552.88 723.3h6.63v4.4h-6.63zM2559.63 223.67h6.63v4.4h-6.63zM2566.38 223.67h6.63v4.4h-6.63zM2573.13 275.47h6.63v4.4h-6.63zM2579.88 289.54h6.63v4.4h-6.63zM2586.63 331.77h6.63v4.4h-6.63zM2593.38 723.3h6.63v4.4h-6.63zM2600.13 723.3h6.63v4.4h-6.63zM2606.89 331.77h6.63v4.4h-6.63zM2613.64 331.77h6.63v4.4h-6.63zM2620.39 331.77h6.63v4.4h-6.63zM2627.14 723.3h6.63v4.4h-6.63zM2633.89 331.77h6.63v4.4h-6.63zM2640.64 723.3h6.63v4.4h-6.63zM2647.39 723.3h6.63v4.4h-6.63zM2654.14 223.67h6.63v4.4h-6.63zM2660.89 223.67h6.63v4.4h-6.63zM2667.64 223.67h6.63v4.4h-6.63zM2674.39 289.54h6.63v4.4h-6.63zM2681.15 275.47h6.63v4.4h-6.63zM2687.9 723.3h6.63v4.4h-6.63zM2694.65 723.3h6.63v4.4h-6.63zM2701.4 275.47h6.63v4.4h-6.63zM2708.15 223.67h6.63v4.4h-6.63zM2714.9 223.67h6.63v4.4h-6.63zM2721.65 289.54h6.63v4.4h-6.63zM2728.4 331.77h6.63v4.4h-6.63zM2735.15 723.3h6.63v4.4h-6.63zM2741.91 723.3h6.63v4.4h-6.63zM2748.66 275.47h6.63v4.4h-6.63zM2755.41 275.47h6.63v4.4h-6.63zM2762.16 275.47h6.63v4.4h-6.63zM2768.91 345.85h6.63v4.4h-6.63zM2775.66 331.77h6.63v4.4h-6.63zM2782.41 723.3h6.63v4.4h-6.63zM2789.16 723.3h6.63v4.4h-6.63zM2795.91 275.47h6.63v4.4h-6.63zM2802.66 275.47h6.63v4.4h-6.63zM2809.41 275.47h6.63v4.4h-6.63zM2816.17 345.85h6.63v4.4h-6.63zM2822.92 723.3h6.63v4.4h-6.63zM2829.67 723.3h6.63v4.4h-6.63zM2836.42 723.3h6.63v4.4h-6.63zM2843.17 444.38h6.63v4.4h-6.63zM2849.92 444.38h6.63v4.4h-6.63zM2856.67 444.38h6.63v4.4h-6.63zM2863.42 402.15h6.63v4.4h-6.63zM2870.17 388.08h6.63v4.4h-6.63z" fill="#29313a"/>
<text x="416.13" y="770.6" text-anchor="middle" class="xl">1 Jan</text>
<text x="578.15" y="770.6" text-anchor="middle" class="xl">25 Jan</text>
<text x="740.17" y="770.6" text-anchor="middle" class="xl">18 Feb</text>
<text x="902.2" y="770.6" text-anchor="middle" class="xl">14 Mar</text>
<text x="1064.22" y="770.6" text-anchor="middle" class="xl">7 Apr</text>
<text x="1226.25" y="770.6" text-anchor="middle" class="xl">1 May</text>
<text x="1388.27" y="770.6" text-anchor="middle" class="xl">25 May</text>
<text x="1550.29" y="770.6" text-anchor="middle" class="xl">18 Jun</text>
<text x="1712.32" y="770.6" text-anchor="middle" class="xl">12 Jul</text>
<text x="1874.34" y="770.6" text-anchor="middle" class="xl">5 Aug</text>
<text x="2036.37" y="770.6" text-anchor="middle" class="xl">29 Aug</text>
<text x="2198.39" y="770.6" text-anchor="middle" class="xl">22 Sep</text>
<text x="2360.41" y="770.6" text-anchor="middle" class="xl">16 Oct</text>
<text x="2522.44" y="770.6" text-anchor="middle" class="xl">9 Nov</text>
<text x="2684.46" y="770.6" text-anchor="middle" class="xl">3 Dec</text>
<text x="2846.49" y="770.6" text-anchor="middle" class="xl">27 Dec</text>
<circle cx="417.03" cy="803.6" r="7.6" fill="#a6cf72"/>
<circle cx="450.78" cy="803.6" r="7.6" fill="#a6cf72"/>
<circle cx="531.79" cy="803.6" r="7.6" fill="#a0a0a0"/>
<circle cx="579.05" cy="803.6" r="7.6" fill="#fd9a3c"/>
<circle cx="585.8" cy="803.6" r="7.6" fill="#fd9a3c"/>
<circle cx="599.3" cy="803.6" r="7.6" fill="#fd9a3c"/>
<circle cx="606.05" cy="803.6" r="7.6" fill="#7fce9b"/>
<circle cx="612.8" cy="803.6" r="7.6" fill="#7fce9b"/>
<circle cx="627.99" cy="803.6" r="7.6" fill="#7fce9b"/>
<circle cx="640.48" cy="803.6" r="7.6" fill="#fd9a3c"/>
<circle cx="658.71" cy="803.6" r="7.6" fill="#7fce9b"/>
<circle cx="673.56" cy="803.6" r="7.6" fill="#336f91"/>
<circle cx="700.57" cy="803.6" r="7.6" fill="#336f91"/>
<circle cx="720.82" cy="803.6" r="7.6" fill="#a0a0a0"/>
<circle cx="727.57" cy="803.6" r="7.6" fill="#a0a0a0"/>
<circle cx="747.82" cy="803.6" r="7.6" fill="#336f91"/>
<circle cx="795.08" cy="803.6" r="7.6" fill="#336f91"/>
<circle cx="842.34" cy="803.6" r="7.6" fill="#336f91"/>
<circle cx="889.6" cy="803.6" r="7.6" fill="#336f91"/>
<circle cx="984.11" cy="803.6" r="7.6" fill="#336f91"/>
<circle cx="1004.36" cy="803.6" r="7.6" fill="#336f91"/>
<circle cx="1024.62" cy="803.6" r="7.6" fill="#336f91"/>
<circle cx="1031.37" cy="803.6" r="7.6" fill="#336f91"/>
<circle cx="1065.12" cy="803.6" r="7.6" fill="#a0a0a0"/>
<circle cx="1078.62" cy="803.6" r="7.6" fill="#336f91"/>
<circle cx="1125.88" cy="803.6" r="7.6" fill="#336f91"/>
<circle cx="1173.14" cy="803.6" r="7.6" fill="#336f91"/>
<circle cx="1220.39" cy="803.6" r="7.6" fill="#336f91"/>
<circle cx="1267.65" cy="803.6" r="7.6" fill="#336f91"/>
<circle cx="1314.91" cy="803.6" r="7.6" fill="#336f91"/>
<circle cx="1382.42" cy="803.6" r="7.6" fill="#336f91"/>
<circle cx="1429.68" cy="803.6" r="7.6" fill="#a0a0a0"/>
<circle cx="1497.19" cy="803.6" r="7.6" fill="#336f91"/>
<circle cx="1551.19" cy="803.6" r="7.6" fill="#336f91"/>
<circle cx="1571.45" cy="803.6" r="7.6" fill="#fcc13f"/>
<circle cx="1598.45" cy="803.6" r="7.6" fill="#c478cf"/>
<circle cx="1632.21" cy="803.6" r="7.6" fill="#7b84d3"/>
<circle cx="1659.21" cy="803.6" r="7.6" fill="#a0a0a0"/>
<circle cx="1665.96" cy="803.6" r="7.6" fill="#a0a0a0"/>
<circle cx="1854.99" cy="803.6" r="7.6" fill="#dcb6ea"/>
<circle cx="1868.49" cy="803.6" r="7.6" fill="#c6c999"/>
<circle cx="2091.27" cy="803.6" r="7.6" fill="#a0a0a0"/>
<circle cx="2118.28" cy="803.6" r="7.6" fill="#fcc13f"/>
<circle cx="2138.53" cy="803.6" r="7.6" fill="#fcc13f"/>
<circle cx="2145.28" cy="803.6" r="7.6" fill="#c478cf"/>
<circle cx="2165.53" cy="803.6" r="7.6" fill="#c478cf"/>
<circle cx="2327.56" cy="803.6" r="7.6" fill="#a0a0a0"/>
<circle cx="2428.82" cy="803.6" r="7.6" fill="#fcc13f"/>
<circle cx="2489.58" cy="803.6" r="7.6" fill="#a0a0a0"/>
<circle cx="2503.08" cy="803.6" r="7.6" fill="#fcc13f"/>
<circle cx="2530.09" cy="803.6" r="7.6" fill="#c478cf"/>
<circle cx="2536.84" cy="803.6" r="7.6" fill="#a0a0a0"/>
<circle cx="2631.35" cy="803.6" r="7.6" fill="#a0a0a0"/>
<circle cx="2688.4" cy="803.6" r="7.6" fill="#336f91"/>
<circle cx="2669.5" cy="803.6" r="7.6" fill="#fcc13f"/>
<circle cx="2675.91" cy="803.6" r="7.6" fill="#fcc13f"/>
<circle cx="2689.41" cy="803.6" r="7.6" fill="#fcc13f"/>
<circle cx="2705.61" cy="803.6" r="7.6" fill="#fcc13f"/>
<circle cx="2759.62" cy="803.6" r="7.6" fill="#74c96a"/>
<circle cx="2766.37" cy="803.6" r="7.6" fill="#74c96a"/>
<circle cx="2827.13" cy="803.6" r="7.6" fill="#a0a0a0"/>
<circle cx="2833.88" cy="803.6" r="7.6" fill="#a0a0a0"/>
</svg>
<div class="dd" style="left:2226px;width:608px"></div>
<div class="t" style="left:2262.45px;top:83.5px;font-size:34.5px;letter-spacing:-0.79px;color:#27313f;-webkit-text-stroke:.22px #fff">Scheduled</div>
<svg class="a" style="left:2773.5px;top:94.2px" width="21" height="13.6" viewBox="0 0 21 13.6"><path d="M3 3L10.5 10.6L18 3" fill="none" stroke="#3d4d66" stroke-width="3.5" stroke-linecap="round" stroke-linejoin="round"/></svg>
<div class="dd" style="left:2856px;width:205px"></div>
<div class="t" style="left:2892.25px;top:83.5px;font-size:34.5px;letter-spacing:-1.66px;color:#27313f;-webkit-text-stroke:.22px #fff">Days</div>
<svg class="a" style="left:3000px;top:94.2px" width="21" height="13.6" viewBox="0 0 21 13.6"><path d="M3 3L10.5 10.6L18 3" fill="none" stroke="#3d4d66" stroke-width="3.5" stroke-linecap="round" stroke-linejoin="round"/></svg>
<div class="cards">
<i style="left:490px"></i>
<i style="left:1578px"></i>
<i style="left:2070.5px"></i>
<i style="left:2465px"></i>
</div>
<div class="t" style="left:228.91px;top:898.87px;font-size:33.7px;letter-spacing:-0.52px;-webkit-text-stroke:.22px #fff">Capacity</div>
<div class="t" style="left:721.48px;top:898.87px;font-size:33.7px;letter-spacing:-0.39px;-webkit-text-stroke:.22px #fff">Scheduled</div>
<div class="t" style="left:902.22px;top:898.87px;font-size:33.7px;letter-spacing:-1.62px;color:#868e8e;-webkit-text-stroke:.22px #fff">25%</div>
<div class="t" style="left:1806.99px;top:898.87px;font-size:33.7px;letter-spacing:-0.11px;-webkit-text-stroke:.22px #fff">Unscheduled</div>
<div class="t" style="left:2028.71px;top:898.87px;font-size:33.7px;letter-spacing:-1.62px;color:#868e8e;-webkit-text-stroke:.22px #fff">78%</div>
<div class="t" style="left:2302.54px;top:898.87px;font-size:33.7px;letter-spacing:-0.24px;-webkit-text-stroke:.22px #fff">Time off</div>
<div class="t" style="left:2696.3px;top:898.87px;font-size:33.7px;letter-spacing:-0.34px;-webkit-text-stroke:.22px #fff">Overtime</div>
<div class="t" style="left:226.84px;top:949.99px;font-size:75.5px;letter-spacing:-2.48px;color:#353c45;-webkit-text-stroke:1px #353c45">13,668.18</div>
<div class="t" style="left:544.92px;top:968.78px;font-size:53.3px;color:#353c45;-webkit-text-stroke:0.5px #353c45">h</div>
<div class="t" style="left:723.37px;top:949.99px;font-size:75.5px;letter-spacing:-0.22px;color:#353c45;-webkit-text-stroke:1px #353c45">3,356.27</div>
<div class="t" style="left:1016.92px;top:968.78px;font-size:53.3px;color:#353c45;-webkit-text-stroke:0.5px #353c45">h</div>
<div class="t" style="left:1805.74px;top:949.99px;font-size:75.5px;letter-spacing:-2.37px;color:#353c45;-webkit-text-stroke:1px #353c45">10,618.79</div>
<div class="t" style="left:2124.42px;top:968.78px;font-size:53.3px;color:#353c45;-webkit-text-stroke:0.5px #353c45">h</div>
<div class="t" style="left:2299.52px;top:949.99px;font-size:75.5px;letter-spacing:-2.41px;color:#353c45;-webkit-text-stroke:1px #353c45">771.92</div>
<div class="t" style="left:2518.82px;top:968.78px;font-size:53.3px;color:#353c45;-webkit-text-stroke:0.5px #353c45">h</div>
<div class="t" style="left:2697.67px;top:949.99px;font-size:75.5px;letter-spacing:1.01px;color:#353c45;-webkit-text-stroke:1px #353c45">306.88</div>
<div class="t" style="left:2934.92px;top:968.78px;font-size:53.3px;color:#353c45;-webkit-text-stroke:0.5px #353c45">h</div>
<div class="sw" style="top:968.4px;background:#2accc3;border-color:#21aaa2"></div>
<div class="t" style="left:1216.32px;top:961.37px;font-size:33.7px;letter-spacing:-0.43px;-webkit-text-stroke:.22px #fff">Billable</div>
<div class="t" style="left:1438.21px;top:961.37px;font-size:33.7px;letter-spacing:-0.18px;-webkit-text-stroke:.22px #fff">2,096.02h</div>
<div class="t" style="left:1596.09px;top:961.37px;font-size:33.7px;letter-spacing:-1.62px;color:#868e8e;-webkit-text-stroke:.22px #fff">62%</div>
<div class="sw" style="top:1013.1px;background:#5eeadf;border-color:#45c9bf"></div>
<div class="t" style="left:1216.32px;top:1006.07px;font-size:33.7px;letter-spacing:0.2px;-webkit-text-stroke:.22px #fff">Non-billable</div>
<div class="t" style="left:1437.37px;top:1006.07px;font-size:33.7px;letter-spacing:-0.67px;-webkit-text-stroke:.22px #fff">1,260.25h</div>
<div class="t" style="left:1596.09px;top:1006.07px;font-size:33.7px;letter-spacing:-1.62px;color:#868e8e;-webkit-text-stroke:.22px #fff">38%</div>
<div class="sw" style="top:1057.9px;border-color:#b0b0b0;background-color:#e9e9e9;background-image:linear-gradient(45deg,#d2d2d2 25%,transparent 25%,transparent 75%,#d2d2d2 75%),linear-gradient(45deg,#d2d2d2 25%,transparent 25%,transparent 75%,#d2d2d2 75%);background-size:6px 6px;background-position:0 0,3px 3px"></div>
<div class="t" style="left:1218.34px;top:1050.87px;font-size:33.7px;letter-spacing:-0.09px;-webkit-text-stroke:.22px #fff">Tentative (all)</div>
<div class="t" style="left:1485.04px;top:1050.87px;font-size:33.7px;letter-spacing:-0.66px;-webkit-text-stroke:.22px #fff">40.5</div>
<div class="t" style="left:1613.26px;top:1050.87px;font-size:33.7px;letter-spacing:-1.62px;color:#868e8e;-webkit-text-stroke:.22px #fff">1%</div>
<div class="t" style="left:190.24px;top:1195.65px;font-size:29px;letter-spacing:-0.18px;color:#2d3640;font-weight:bold">People</div>
<div class="t" style="left:299px;top:1195.23px;font-size:29.5px;color:#2d3640;-webkit-text-stroke:.22px #fff">9</div>
<div class="t" style="left:388.24px;top:1195.65px;font-size:29px;letter-spacing:0.64px;color:#868e8e;font-weight:bold">Departments</div>
<div class="t" style="left:586.42px;top:1195.23px;font-size:29.5px;color:#959d9d;-webkit-text-stroke:.22px #fff">5</div>
<div class="t" style="left:674.34px;top:1195.65px;font-size:29px;letter-spacing:0.2px;color:#868e8e;font-weight:bold">Projects</div>
<div class="t" style="left:803.52px;top:1195.23px;font-size:29.5px;letter-spacing:0.54px;color:#959d9d;-webkit-text-stroke:.22px #fff">23</div>
<div class="t" style="left:912.91px;top:1195.65px;font-size:29px;letter-spacing:-0.36px;color:#868e8e;font-weight:bold">Tasks</div>
<div class="t" style="left:1006.49px;top:1195.23px;font-size:29.5px;letter-spacing:0.87px;color:#959d9d;-webkit-text-stroke:.22px #fff">33</div>
<div class="t" style="left:1117.01px;top:1195.65px;font-size:29px;letter-spacing:-0.14px;color:#868e8e;font-weight:bold">Time off</div>
<div class="t" style="left:1242.99px;top:1195.23px;font-size:29.5px;letter-spacing:-1.42px;color:#959d9d;-webkit-text-stroke:.22px #fff">16</div>
<div class="t" style="left:1349.31px;top:1195.65px;font-size:29px;letter-spacing:0.21px;color:#868e8e;font-weight:bold">Time tracking</div>
<div class="t" style="left:1553.4px;top:1195.23px;font-size:29.5px;color:#959d9d;-webkit-text-stroke:.22px #fff">9</div>
<div class="a" style="left:181px;top:1258px;width:2881px;height:2px;background:#dcdcdc"></div>
<div class="a" style="left:181px;top:1250.5px;width:144px;height:7.6px;border-radius:4px;background:#2d3640"></div>
<div class="a" style="left:181px;top:1260px;width:2881px;height:82px;background:#f6f6f6;border-radius:0 0 10px 0"></div>
<svg class="a" style="left:256.4px;top:1290.9px" width="12.8" height="19.4" viewBox="0 0 12.8 19.4"><path d="M3 3L9.8 9.7L3 16.4" fill="none" stroke="#727a7a" stroke-width="3.1" stroke-linecap="round" stroke-linejoin="round"/></svg>
<div class="t" style="left:311.12px;top:1283.69px;font-size:32.5px;letter-spacing:0.03px;color:#868e8e;-webkit-text-stroke:.22px #f6f6f6">Person</div>
<div class="t" style="left:844.52px;top:1283.69px;font-size:32.5px;letter-spacing:0.6px;color:#868e8e;-webkit-text-stroke:.22px #f6f6f6">Department</div>
<div class="t" style="left:1253.67px;top:1283.69px;font-size:32.5px;letter-spacing:0.18px;color:#868e8e;-webkit-text-stroke:.22px #f6f6f6">Capacity</div>
<div class="t" style="left:1452.64px;top:1283.69px;font-size:32.5px;letter-spacing:0.3px;color:#868e8e;-webkit-text-stroke:.22px #f6f6f6">Scheduled</div>
<div class="t" style="left:1728.52px;top:1283.69px;font-size:32.5px;letter-spacing:-0.04px;color:#868e8e;-webkit-text-stroke:.22px #f6f6f6">Billable</div>
<div class="t" style="left:1878.82px;top:1283.69px;font-size:32.5px;letter-spacing:0.75px;color:#868e8e;-webkit-text-stroke:.22px #f6f6f6">Non-billable</div>
<div class="t" style="left:2117.57px;top:1283.69px;font-size:32.5px;letter-spacing:0.57px;color:#868e8e;-webkit-text-stroke:.22px #f6f6f6">Time off</div>
<div class="t" style="left:2328.46px;top:1283.69px;font-size:32.5px;letter-spacing:0.49px;color:#868e8e;-webkit-text-stroke:.22px #f6f6f6">Overtime</div>
<div class="t" style="left:2535.64px;top:1283.69px;font-size:32.5px;letter-spacing:-0.79px;-webkit-text-stroke:.22px #f6f6f6">Sched. %</div>
<div class="a" style="left:2689.5px;top:1279px;width:44px;height:43.5px;border:2px solid #d6d6d6;border-radius:7px"></div>
<svg class="a" style="left:2702.25px;top:1295.05px" width="18.5" height="12.5" viewBox="0 0 18.5 12.5"><path d="M3 3L9.25 9.5L15.5 3" fill="none" stroke="#868e8e" stroke-width="3" stroke-linecap="round" stroke-linejoin="round"/></svg>
<div class="a" style="left:181px;top:1341px;width:2881px;height:520px;border:2px solid #dedede;border-radius:12px 12px 0 0;background:#fff"></div>
<svg class="a" style="left:258px;top:1374px" width="12.8" height="19.4" viewBox="0 0 12.8 19.4"><path d="M3 3L9.8 9.7L3 16.4" fill="none" stroke="#7b8484" stroke-width="3.1" stroke-linecap="round" stroke-linejoin="round"/></svg>
<div class="t" style="left:313.31px;top:1366.37px;font-size:35px;letter-spacing:0.07px;-webkit-text-stroke:.22px #fff">Dave Greenfield</div>
<div class="t" style="left:846.71px;top:1366.37px;font-size:35px;letter-spacing:0.64px;-webkit-text-stroke:.22px #fff">Marketing</div>
<div class="t" style="left:1303.06px;top:1366.37px;font-size:35px;letter-spacing:-1.68px;-webkit-text-stroke:.22px #fff">1,414</div>
<div class="t" style="left:1501.65px;top:1366.37px;font-size:35px;letter-spacing:0.28px;-webkit-text-stroke:.22px #fff">660.78</div>
<div class="t" style="left:1731.59px;top:1366.37px;font-size:35px;letter-spacing:-0.79px;-webkit-text-stroke:.22px #fff">387.28</div>
<div class="t" style="left:1974.35px;top:1366.37px;font-size:35px;letter-spacing:-0.62px;-webkit-text-stroke:.22px #fff">273.5</div>
<div class="t" style="left:2182.88px;top:1366.37px;font-size:35px;letter-spacing:-0.73px;-webkit-text-stroke:.22px #fff">140</div>
<div class="t" style="left:2356.45px;top:1366.37px;font-size:35px;letter-spacing:0.26px;-webkit-text-stroke:.22px #fff">206.25</div>
<div class="t" style="left:2667.16px;top:1366.37px;font-size:35px;letter-spacing:-1.68px;-webkit-text-stroke:.22px #fff">47%</div>
<div class="bt" style="left:2815px;top:1369.8px;width:182px;border:2px solid #dfdfdf"></div>
<div class="bt" style="left:2815px;top:1369.8px;width:48.9px;background:#2accc3"></div>
<div class="bt" style="left:2863.9px;top:1369.8px;width:3.7px;background:#bccdf0"></div>
<div class="bt" style="left:2867.6px;top:1369.8px;width:36.2px;background:#5eeadf"></div>
<div class="a" style="left:2996.3px;top:1368.9px;width:3.8px;height:27.6px;background:#2f353c"></div>
<div class="a" style="left:183px;top:1419.9px;width:2877px;height:2px;background:#e2e2e2"></div>
<svg class="a" style="left:258px;top:1453.6px" width="12.8" height="19.4" viewBox="0 0 12.8 19.4"><path d="M3 3L9.8 9.7L3 16.4" fill="none" stroke="#7b8484" stroke-width="3.1" stroke-linecap="round" stroke-linejoin="round"/></svg>
<div class="t" style="left:313.31px;top:1445.97px;font-size:35px;letter-spacing:0.25px;-webkit-text-stroke:.22px #fff">Michael Jones</div>
<div class="t" style="left:847.85px;top:1445.97px;font-size:35px;letter-spacing:0.06px;-webkit-text-stroke:.22px #fff">Creative</div>
<div class="t" style="left:1280.99px;top:1445.97px;font-size:35px;letter-spacing:-0.66px;-webkit-text-stroke:.22px #fff">319.92</div>
<div class="t" style="left:1511.7px;top:1445.97px;font-size:35px;letter-spacing:-1.68px;-webkit-text-stroke:.22px #fff">125.17</div>
<div class="t" style="left:1736.3px;top:1445.97px;font-size:35px;letter-spacing:-1.68px;-webkit-text-stroke:.22px #fff">121.17</div>
<div class="t" style="left:2039.6px;top:1445.97px;font-size:35px;-webkit-text-stroke:.22px #fff">4</div>
<div class="t" style="left:2220.52px;top:1445.97px;font-size:35px;-webkit-text-stroke:.22px #fff">8</div>
<div class="t" style="left:2419.47px;top:1445.97px;font-size:35px;letter-spacing:-1.68px;-webkit-text-stroke:.22px #fff">5.5</div>
<div class="t" style="left:2667.16px;top:1445.97px;font-size:35px;letter-spacing:-1.68px;-webkit-text-stroke:.22px #fff">39%</div>
<div class="bt" style="left:2815px;top:1449.4px;width:194px;border:2px solid #dfdfdf"></div>
<div class="bt" style="left:2815px;top:1449.4px;width:72.8px;background:#2accc3"></div>
<div class="bt" style="left:2887.8px;top:1449.4px;width:6.7px;background:#5eeadf"></div>
<div class="a" style="left:3008.2px;top:1448.5px;width:4.9px;height:27.6px;background:#2f353c"></div>
<div class="a" style="left:183px;top:1500.5px;width:2877px;height:2px;background:#e2e2e2"></div>
<svg class="a" style="left:258px;top:1534.5px" width="12.8" height="19.4" viewBox="0 0 12.8 19.4"><path d="M3 3L9.8 9.7L3 16.4" fill="none" stroke="#7b8484" stroke-width="3.1" stroke-linecap="round" stroke-linejoin="round"/></svg>
<div class="t" style="left:313.31px;top:1526.87px;font-size:35px;-webkit-text-stroke:.22px #fff">Belinda Wong</div>
<div class="t" style="left:846.71px;top:1526.87px;font-size:35px;letter-spacing:0.1px;-webkit-text-stroke:.22px #fff">Design</div>
<div class="t" style="left:1301.28px;top:1526.87px;font-size:35px;letter-spacing:-1.1px;-webkit-text-stroke:.22px #fff">1,888</div>
<div class="t" style="left:1502.45px;top:1526.87px;font-size:35px;letter-spacing:0.1px;-webkit-text-stroke:.22px #fff">696.75</div>
<div class="t" style="left:1727.45px;top:1526.87px;font-size:35px;letter-spacing:0.02px;-webkit-text-stroke:.22px #fff">624.75</div>
<div class="t" style="left:2022.64px;top:1526.87px;font-size:35px;letter-spacing:-1.68px;-webkit-text-stroke:.22px #fff">72</div>
<div class="t" style="left:2182.88px;top:1526.87px;font-size:35px;letter-spacing:-0.91px;-webkit-text-stroke:.22px #fff">104</div>
<div class="t" style="left:2379.2px;top:1526.87px;font-size:35px;letter-spacing:-0.51px;-webkit-text-stroke:.22px #fff">52.75</div>
<div class="t" style="left:2667.16px;top:1526.87px;font-size:35px;letter-spacing:-1.68px;-webkit-text-stroke:.22px #fff">37%</div>
<div class="bt" style="left:2815px;top:1530.3px;width:188.4px;border:2px solid #dfdfdf"></div>
<div class="bt" style="left:2815px;top:1530.3px;width:61.6px;background:#2accc3"></div>
<div class="bt" style="left:2876.6px;top:1530.3px;width:4.8px;background:#bccdf0"></div>
<div class="bt" style="left:2881.4px;top:1530.3px;width:6.7px;background:#5eeadf"></div>
<div class="a" style="left:3002.6px;top:1529.4px;width:5.2px;height:27.6px;background:#2f353c"></div>
<div class="a" style="left:183px;top:1581.8px;width:2877px;height:2px;background:#e2e2e2"></div>
<svg class="a" style="left:258px;top:1615.3px" width="12.8" height="19.4" viewBox="0 0 12.8 19.4"><path d="M3 3L9.8 9.7L3 16.4" fill="none" stroke="#7b8484" stroke-width="3.1" stroke-linecap="round" stroke-linejoin="round"/></svg>
<div class="t" style="left:313.31px;top:1607.67px;font-size:35px;-webkit-text-stroke:.22px #fff">Rachel Withers</div>
<div class="t" style="left:846.71px;top:1607.67px;font-size:35px;letter-spacing:0.64px;-webkit-text-stroke:.22px #fff">Marketing</div>
<div class="t" style="left:1255.47px;top:1607.67px;font-size:35px;letter-spacing:-1.04px;-webkit-text-stroke:.22px #fff">1,831.53</div>
<div class="t" style="left:1523.3px;top:1607.67px;font-size:35px;letter-spacing:-0.23px;-webkit-text-stroke:.22px #fff">572.5</div>
<div class="t" style="left:1777.75px;top:1607.67px;font-size:35px;letter-spacing:-0.6px;-webkit-text-stroke:.22px #fff">287</div>
<div class="t" style="left:1973.15px;top:1607.67px;font-size:35px;letter-spacing:-0.32px;-webkit-text-stroke:.22px #fff">285.5</div>
<div class="t" style="left:2134.47px;top:1607.67px;font-size:35px;letter-spacing:-0.33px;-webkit-text-stroke:.22px #fff">159.95</div>
<div class="t" style="left:2399.35px;top:1607.67px;font-size:35px;letter-spacing:-0.77px;-webkit-text-stroke:.22px #fff">2.07</div>
<div class="t" style="left:2667.16px;top:1607.67px;font-size:35px;letter-spacing:-1.68px;-webkit-text-stroke:.22px #fff">31%</div>
<div class="bt" style="left:2815px;top:1611.1px;width:182.7px;border:2px solid #dfdfdf"></div>
<div class="bt" style="left:2815px;top:1611.1px;width:27.2px;background:#2accc3"></div>
<div class="bt" style="left:2842.2px;top:1611.1px;width:4.5px;background:#bccdf0"></div>
<div class="bt" style="left:2846.7px;top:1611.1px;width:29.5px;background:#5eeadf"></div>
<div class="a" style="left:2997px;top:1610.2px;width:4.9px;height:27.6px;background:#2f353c"></div>
<div class="a" style="left:183px;top:1662.8px;width:2877px;height:2px;background:#e2e2e2"></div>
<svg class="a" style="left:258px;top:1695.9px" width="12.8" height="19.4" viewBox="0 0 12.8 19.4"><path d="M3 3L9.8 9.7L3 16.4" fill="none" stroke="#7b8484" stroke-width="3.1" stroke-linecap="round" stroke-linejoin="round"/></svg>
<div class="t" style="left:313.31px;top:1688.27px;font-size:35px;letter-spacing:-0.38px;-webkit-text-stroke:.22px #fff">Erin Riggins</div>
<div class="t" style="left:846.71px;top:1688.27px;font-size:35px;letter-spacing:0.2px;-webkit-text-stroke:.22px #fff">Development</div>
<div class="t" style="left:1302.08px;top:1688.27px;font-size:35px;letter-spacing:-1.24px;-webkit-text-stroke:.22px #fff">1,792</div>
<div class="t" style="left:1503.5px;top:1688.27px;font-size:35px;letter-spacing:-0.11px;-webkit-text-stroke:.22px #fff">550.75</div>
<div class="t" style="left:1725.55px;top:1688.27px;font-size:35px;letter-spacing:0.4px;-webkit-text-stroke:.22px #fff">290.25</div>
<div class="t" style="left:1972.05px;top:1688.27px;font-size:35px;letter-spacing:-0.04px;-webkit-text-stroke:.22px #fff">260.5</div>
<div class="t" style="left:2180.85px;top:1688.27px;font-size:35px;letter-spacing:0.28px;-webkit-text-stroke:.22px #fff">200</div>
<div class="t" style="left:2426.25px;top:1688.27px;font-size:35px;letter-spacing:-0.25px;-webkit-text-stroke:.22px #fff">26</div>
<div class="t" style="left:2667.16px;top:1688.27px;font-size:35px;letter-spacing:-1.68px;-webkit-text-stroke:.22px #fff">31%</div>
<div class="bt" style="left:2815px;top:1691.7px;width:179.8px;border:2px solid #dfdfdf"></div>
<div class="bt" style="left:2815px;top:1691.7px;width:28.4px;background:#2accc3"></div>
<div class="bt" style="left:2843.4px;top:1691.7px;width:4.4px;background:#bccdf0"></div>
<div class="bt" style="left:2847.8px;top:1691.7px;width:26.1px;background:#5eeadf"></div>
<div class="a" style="left:2994.1px;top:1690.8px;width:3.7px;height:27.6px;background:#2f353c"></div>
<div class="a" style="left:183px;top:1743.7px;width:2877px;height:2px;background:#e2e2e2"></div>
<svg class="a" style="left:258px;top:1776.8px" width="12.8" height="19.4" viewBox="0 0 12.8 19.4"><path d="M3 3L9.8 9.7L3 16.4" fill="none" stroke="#7b8484" stroke-width="3.1" stroke-linecap="round" stroke-linejoin="round"/></svg>
<div class="t" style="left:313.31px;top:1769.17px;font-size:35px;letter-spacing:0.53px;-webkit-text-stroke:.22px #fff">Matt Murray</div>
<div class="t" style="left:849.51px;top:1769.17px;font-size:35px;letter-spacing:-0.75px;-webkit-text-stroke:.22px #fff">Art</div>
<div class="t" style="left:1258.08px;top:1769.17px;font-size:35px;letter-spacing:-1.38px;-webkit-text-stroke:.22px #fff">1,879.51</div>
<div class="t" style="left:1500.9px;top:1769.17px;font-size:35px;letter-spacing:0.44px;-webkit-text-stroke:.22px #fff">506.59</div>
<div class="t" style="left:1731.15px;top:1769.17px;font-size:35px;letter-spacing:-0.69px;-webkit-text-stroke:.22px #fff">231.09</div>
<div class="t" style="left:1975.05px;top:1769.17px;font-size:35px;letter-spacing:-0.79px;-webkit-text-stroke:.22px #fff">275.5</div>
<div class="t" style="left:2146.76px;top:1769.17px;font-size:35px;letter-spacing:-1.68px;-webkit-text-stroke:.22px #fff">111.97</div>
<div class="t" style="left:2397.5px;top:1769.17px;font-size:35px;letter-spacing:-0.24px;-webkit-text-stroke:.22px #fff">0.06</div>
<div class="t" style="left:2667.16px;top:1769.17px;font-size:35px;letter-spacing:-1.68px;-webkit-text-stroke:.22px #fff">27%</div>
<div class="bt" style="left:2815px;top:1772.6px;width:187.6px;border:2px solid #dfdfdf"></div>
<div class="bt" style="left:2815px;top:1772.6px;width:22.8px;background:#2accc3"></div>
<div class="bt" style="left:2837.8px;top:1772.6px;width:4.5px;background:#bccdf0"></div>
<div class="bt" style="left:2842.3px;top:1772.6px;width:27.9px;background:#5eeadf"></div>
<div class="a" style="left:3001.9px;top:1771.7px;width:4.9px;height:27.6px;background:#2f353c"></div>
</body></html>
